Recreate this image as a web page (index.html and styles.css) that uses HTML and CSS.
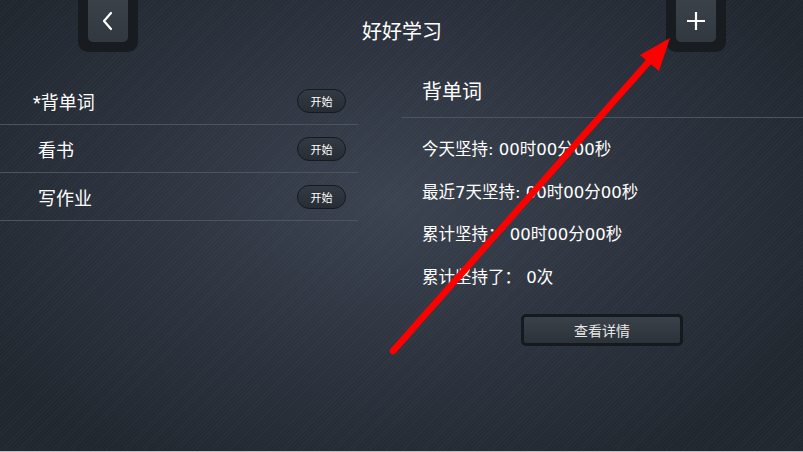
FILE: index.html
```html
<!DOCTYPE html>
<html>
<head>
    <meta charset="UTF-8">
    <meta name="viewport" content="width=device-width, initial-scale=1.0">
    <title>好好学习</title>
    <link rel="stylesheet" href="styles.css">
</head>
<body>
    <div id="screen">
        <div class="topBar">
            <div class="tabButton">
                <div class="tabInner">
                    <svg width="16" height="20" viewBox="0 0 16 20"><path d="M11 2 L4 10 L11 18" fill="none" stroke="#fff" stroke-width="2.2" stroke-linecap="round" stroke-linejoin="round"/></svg>
                </div>
            </div>
            <div class="title">好好学习</div>
            <div class="tabButton">
                <div class="tabInner">
                    <svg width="20" height="20" viewBox="0 0 20 20"><path d="M10 1 V19 M1 10 H19" fill="none" stroke="#fff" stroke-width="2.2"/></svg>
                </div>
            </div>
        </div>
        <div class="content">
            <div class="taskList">
                <div class="taskRow">
                    <span class="taskName">*背单词</span>
                    <button class="startButton">开始</button>
                </div>
                <div class="taskRow">
                    <span class="taskName indent">看书</span>
                    <button class="startButton">开始</button>
                </div>
                <div class="taskRow">
                    <span class="taskName indent">写作业</span>
                    <button class="startButton">开始</button>
                </div>
            </div>
            <div class="detail">
                <div class="detailTitle">背单词</div>
                <div class="stats">
                    <div class="statLine">今天坚持: 00时00分00秒</div>
                    <div class="statLine">最近7天坚持: 00时00分00秒</div>
                    <div class="statLine">累计坚持： 00时00分00秒</div>
                    <div class="statLine">累计坚持了： 0次</div>
                </div>
                <div class="detailActions">
                    <button class="detailButton">查看详情</button>
                </div>
            </div>
        </div>
        <!-- 标注箭头 -->
        <svg class="arrow" width="803" height="452" viewBox="0 0 803 452">
            <line x1="393" y1="351" x2="652" y2="58" stroke="#ff0000" stroke-width="6.5" stroke-linecap="round"/>
            <polygon points="670,38 640,55 659,71" fill="#ff0000"/>
        </svg>
    </div>
</body>
</html>
```

FILE: styles.css
```css
body {
    margin: 0;
    overflow: hidden;
    background-color: #1f2630;
    font-family: Roboto, "Noto Sans CJK SC", sans-serif;
    color: white;
}
#screen {
    width: 803px;
    height: 452px;
    position: relative;
    overflow: hidden;
    box-sizing: border-box;
    border-bottom: 1px solid #b9bec4;
    background:
        repeating-linear-gradient(135deg, rgba(255,255,255,0.025) 0 1px, rgba(0,0,0,0) 1px 3px),
        radial-gradient(ellipse 480px 300px at 390px 200px, #3b4350 0%, #2d3440 50%, #20272f 100%);
}
.topBar {
    display: flex;
    align-items: flex-start;
    padding: 0 77px 0 78px;
    height: 52px;
}
.tabButton {
    width: 60px;
    height: 52px;
    background-color: #181c21;
    border-radius: 0 0 10px 10px;
    padding: 0 10px 10px;
    box-sizing: border-box;
}
.tabInner {
    height: 42px;
    background: linear-gradient(#3a4148, #31383f);
    border-radius: 0 0 5px 5px;
    display: flex;
    justify-content: center;
    align-items: center;
}
.title {
    flex: 1;
    text-align: center;
    font-size: 20px;
    line-height: 20px;
    padding-top: 22px;
}
.content {
    display: flex;
    padding-top: 14px;
}
.taskList {
    width: 358px;
    padding-top: 11px;
}
.taskRow {
    height: 47px;
    border-bottom: 1px solid #4c5460;
    display: flex;
    align-items: center;
    justify-content: space-between;
    padding: 0 12px 0 33px;
}
.taskName {
    font-size: 18px;
}
.indent {
    padding-left: 5px;
}
.startButton {
    width: 49px;
    height: 24px;
    border-radius: 12px;
    border: 1px solid #161a1f;
    background: linear-gradient(#323a43, #262d35);
    color: white;
    font-family: inherit;
    font-size: 11px;
    padding: 0;
}
.detail {
    flex: 1;
    margin-left: 44px;
}
.detailTitle {
    height: 51px;
    border-bottom: 1px solid #4c5460;
    font-size: 20px;
    line-height: 52px;
    padding-left: 20px;
}
.stats {
    padding: 11px 0 0 20px;
}
.statLine {
    font-family: "DejaVu Sans", "Noto Sans CJK SC", sans-serif;
    font-size: 16.5px;
    height: 42.5px;
    line-height: 42px;
}
.detailActions {
    padding: 15px 0 0 119px;
}
.detailButton {
    width: 162px;
    height: 32px;
    border-radius: 5px;
    border: 3px solid #161a1f;
    background: linear-gradient(#3a4148, #2c3239);
    color: #e8e8e8;
    font-family: inherit;
    font-size: 14px;
    padding: 0;
}
.arrow {
    position: absolute;
    top: 0;
    left: 0;
    pointer-events: none;
}
```
